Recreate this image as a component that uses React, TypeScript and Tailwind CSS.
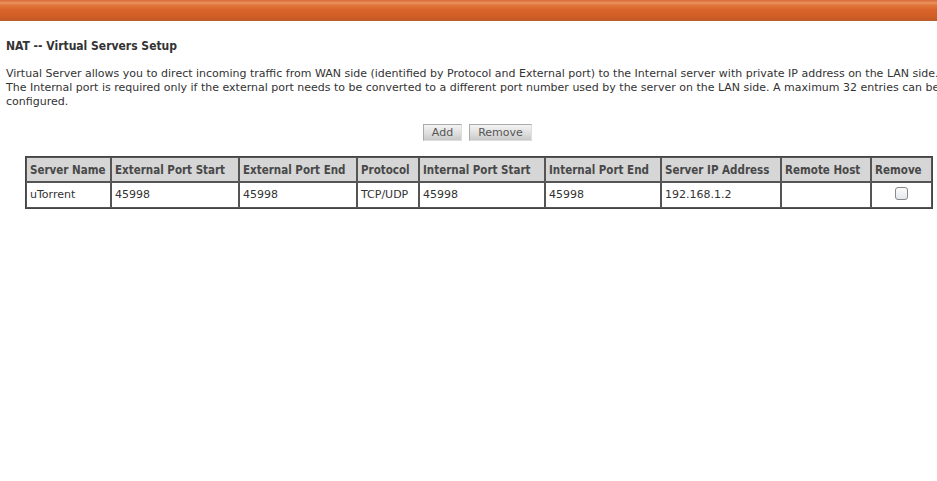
import React from "react";

const cols = [
  { h: "Server Name", w: 85, v: "uTorrent" },
  { h: "External Port Start", w: 128, v: "45998" },
  { h: "External Port End", w: 118, v: "45998" },
  { h: "Protocol", w: 62, v: "TCP/UDP" },
  { h: "Internal Port Start", w: 126, v: "45998" },
  { h: "Internal Port End", w: 116, v: "45998" },
  { h: "Server IP Address", w: 120, v: "192.168.1.2" },
  { h: "Remote Host", w: 90, v: "" },
  { h: "Remove", w: 61, v: "__cb" },
];

const cond = { fontFamily: '"DejaVu Sans Condensed", "DejaVu Sans", sans-serif' };

export default function App() {
  return (
    <div
      className="w-[937px] h-[481px] overflow-hidden bg-white text-[#333]"
      style={{ fontFamily: '"DejaVu Sans", Verdana, sans-serif' }}
    >
      <div className="h-[21px] bg-[linear-gradient(to_bottom,#d96a36_0px,#e9935e_3px,#e2783c_5px,#d8622a_10px,#d25e26_16px,#c15a24_20px,#b86038_21px)]" />
      <div className="pl-[6px] pt-[18px]">
        <div className="text-[12px] font-bold leading-[14px] text-[#333]" style={cond}>NAT -- Virtual Servers Setup</div>
        <div className="mt-[14px] text-[11px] leading-[14px] whitespace-nowrap">
          <div>Virtual Server allows you to direct incoming traffic from WAN side (identified by Protocol and External port) to the Internal server with private IP address on the LAN side.</div>
          <div>The Internal port is required only if the external port needs to be converted to a different port number used by the server on the LAN side. A maximum 32 entries can be</div>
          <div>configured.</div>
        </div>
      </div>
      <div className="flex justify-center gap-[7px] mt-[15px] pl-[18px]">
        <button className="w-[39px] h-[17px] border border-[#aaa] border-r-[#ddd] border-b-[#ddd] bg-[linear-gradient(to_bottom,#f4f4f4,#dcdcdc_60%,#c8c8c8)] text-[11px] leading-[15px] text-[#555]">Add</button>
        <button className="w-[63px] h-[17px] border border-[#aaa] border-r-[#ddd] border-b-[#ddd] bg-[linear-gradient(to_bottom,#f4f4f4,#dcdcdc_60%,#c8c8c8)] text-[11px] leading-[15px] text-[#555]">Remove</button>
      </div>
      <div className="pl-[25px] mt-[15px]">
        <table className="border-separate border-spacing-0 border border-[#444] w-[906px] table-fixed">
          <colgroup>
            {cols.map((c, i) => (
              <col key={i} style={{ width: c.w }} />
            ))}
          </colgroup>
          <thead>
            <tr>
              {cols.map((c, i) => (
                <th
                  key={i}
                  className="h-[25px] border border-[#555] bg-[#d6d6d6] px-[3px] pt-[2px] text-left text-[11.5px] font-bold text-[#484848] whitespace-nowrap"
                  style={cond}
                >
                  {c.h}
                </th>
              ))}
            </tr>
          </thead>
          <tbody>
            <tr>
              {cols.map((c, i) => (
                <td
                  key={i}
                  className={`h-[26px] border border-[#555] px-[3px] text-[11px] text-[#333] whitespace-nowrap ${c.v === "__cb" ? "text-center" : "text-left"}`}
                >
                  {c.v === "__cb" ? (
                    <span className="inline-block w-[13px] h-[13px] mt-[3px] rounded-[3px] border border-[#888] bg-[linear-gradient(to_bottom,#fcfcfc,#e4e8ee)]" />
                  ) : (
                    c.v
                  )}
                </td>
              ))}
            </tr>
          </tbody>
        </table>
      </div>
    </div>
  );
}
